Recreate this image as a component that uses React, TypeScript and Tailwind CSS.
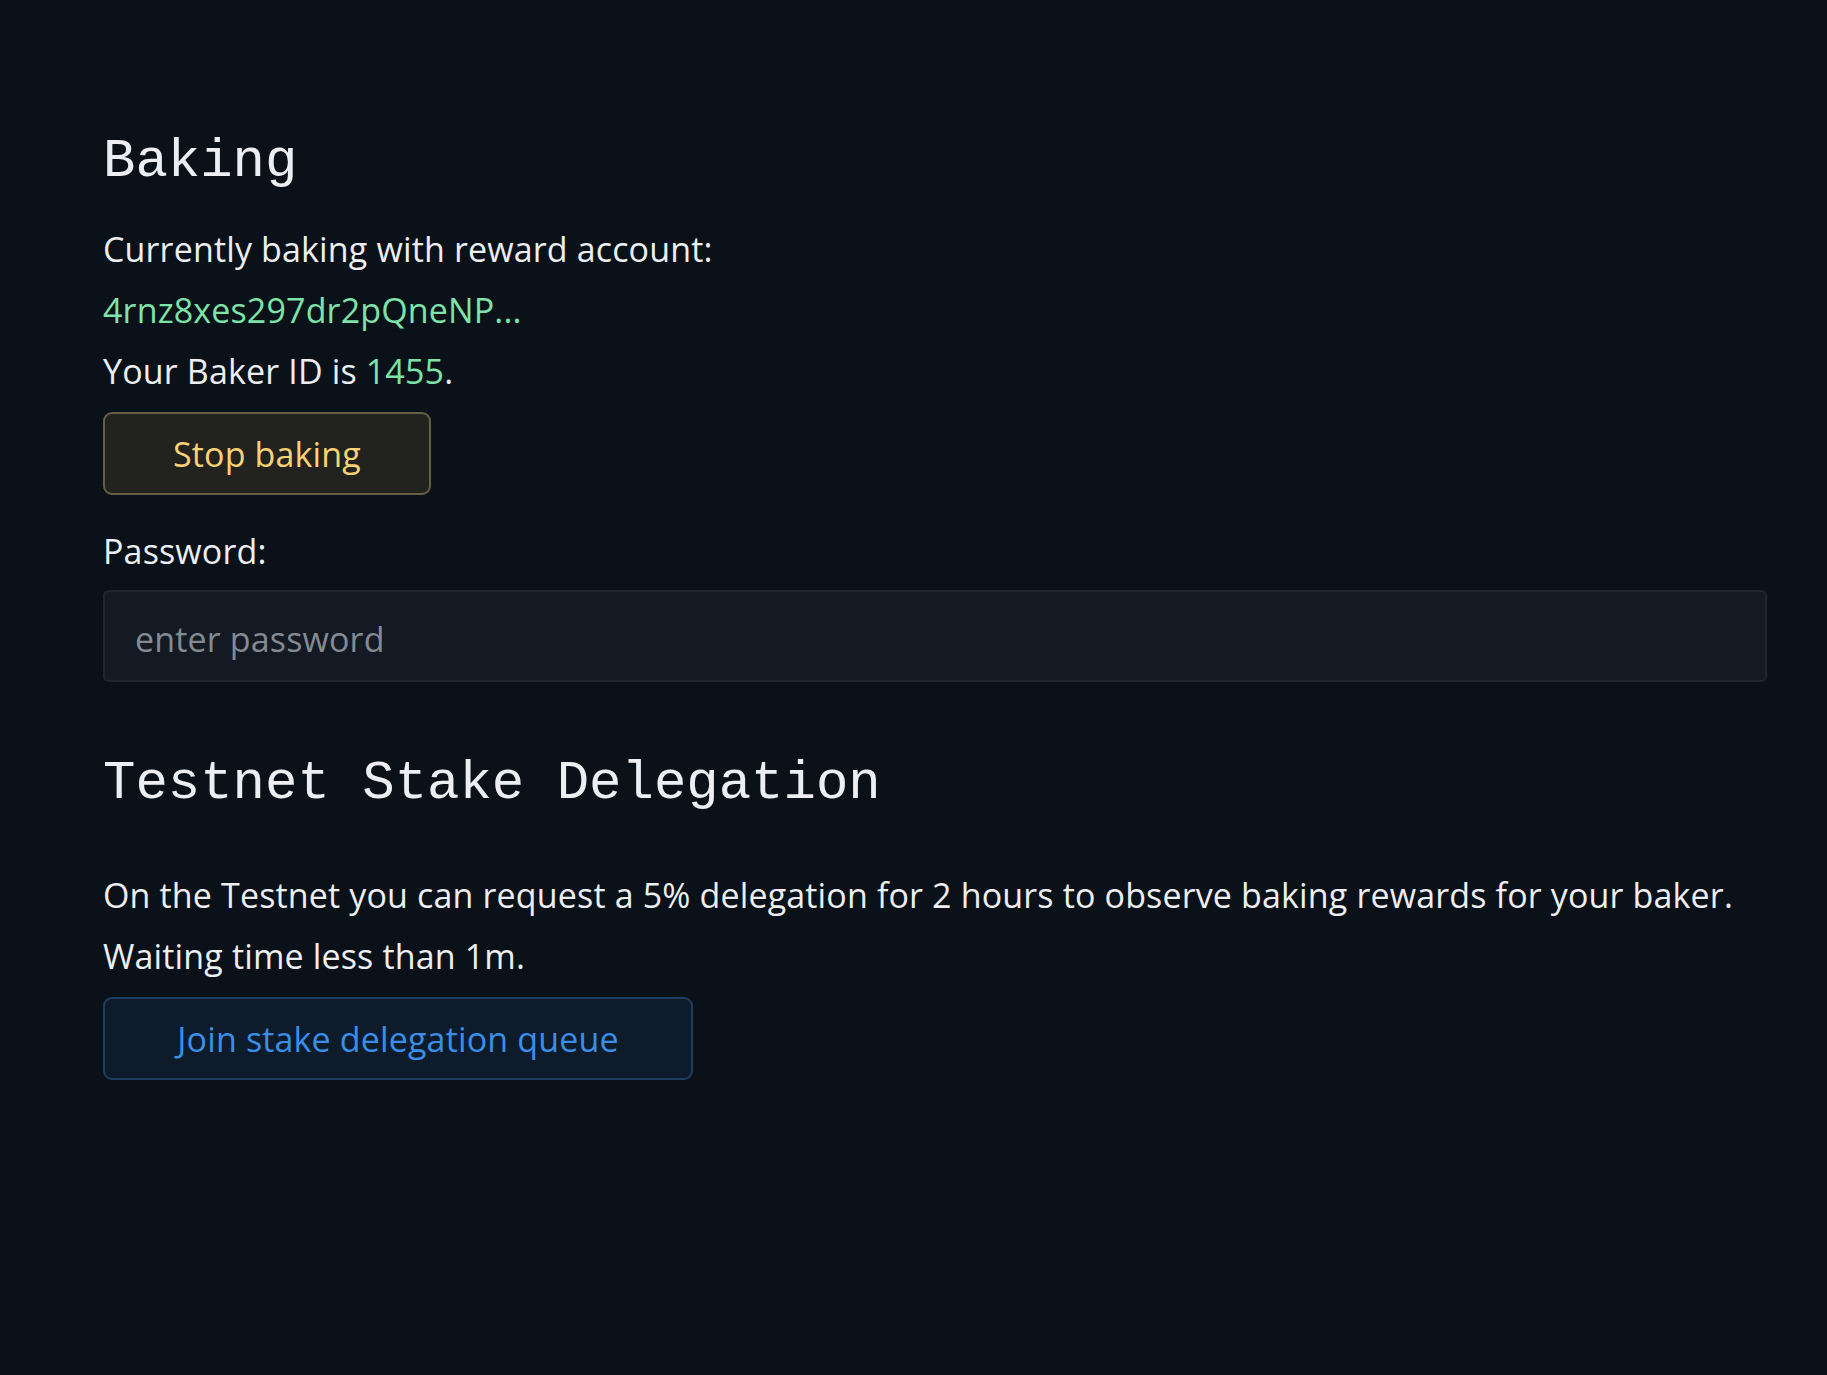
import React from "react";

const sans = "font-['Open_Sans','Noto_Sans',sans-serif]";
const mono = "font-['Liberation_Mono','DejaVu_Sans_Mono',monospace]";

export default function App() {
  return (
    <div className={`min-h-screen w-full bg-[#0b1118] text-[#eceef1] ${sans} tracking-[0.15px]`}>
      <div className="pl-[103px] pr-[60px] pt-[130px]">
        {/* Baking */}
        <h1 className={`${mono} text-[54px] leading-[64px] font-normal tracking-normal`}>Baking</h1>
        <div className="mt-[25px] text-[34px] leading-[61px]">
          <p>Currently baking with reward account:</p>
          <p className="text-[#7de3a8]">4rnz8xes297dr2pQneNP...</p>
          <p>
            Your Baker ID is <span className="text-[#7de3a8]">1455</span>.
          </p>
        </div>
        <button className="mt-[10px] flex h-[83px] w-[328px] items-center justify-center rounded-[9px] border-2 border-[#675f44] bg-[#22221f] text-[34px] leading-[48px] text-[#f9d276]">
          Stop baking
        </button>

        <label className="mt-[26px] block text-[34px] leading-[61px]">Password:</label>
        <input
          type="password"
          placeholder="enter password"
          className="mt-[8px] block h-[92px] w-full rounded-[6px] border-2 border-[#1e2630] bg-[#131a23] px-[30px] pt-[5px] text-[34px] text-[#eceef1] outline-none placeholder:text-[#858a91]"
        />

        {/* Testnet Stake Delegation */}
        <h2 className={`${mono} mt-[70px] text-[54px] leading-[64px] font-normal tracking-normal`}>
          Testnet Stake Delegation
        </h2>
        <div className="mt-[49px] text-[34px] leading-[61px]">
          <p>
            On the Testnet you can request a 5% delegation for 2 hours to observe baking rewards for your
            baker.
          </p>
          <p>Waiting time less than 1m.</p>
        </div>
        <button className="mt-[10px] flex h-[83px] w-[590px] items-center justify-center rounded-[9px] border-2 border-[#1f3d5e] bg-[#0d1b2b] text-[34px] leading-[48px] text-[#3a8ee8]">
          Join stake delegation queue
        </button>
      </div>
    </div>
  );
}
